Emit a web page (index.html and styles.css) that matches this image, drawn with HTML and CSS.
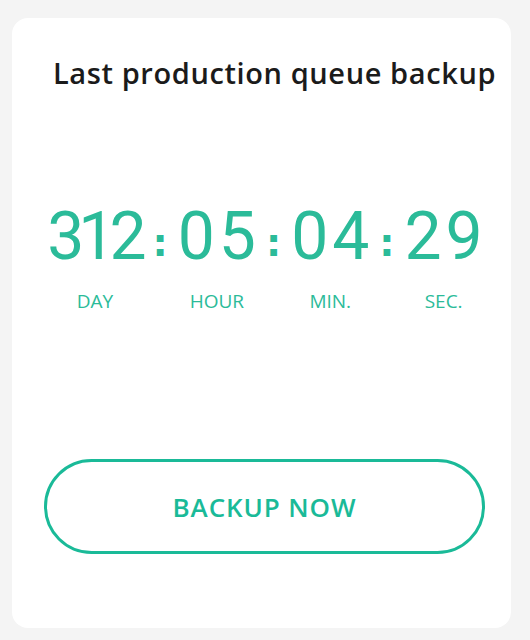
FILE: index.html
```html
<!DOCTYPE html>
<html lang="en">
<head>
<meta charset="utf-8">
<title>Backup</title>
<link rel="stylesheet" href="styles.css">
</head>
<body>
<div class="card">
  <h1 class="title">Last production queue backup</h1>
  <div class="countdown">
    <div class="unit"><div class="num num-narrow">312</div><div class="label">DAY</div></div>
    <div class="sep">:</div>
    <div class="unit"><div class="num">05</div><div class="label">HOUR</div></div>
    <div class="sep">:</div>
    <div class="unit"><div class="num">04</div><div class="label">MIN.</div></div>
    <div class="sep">:</div>
    <div class="unit"><div class="num">29</div><div class="label">SEC.</div></div>
  </div>
  <button class="btn">BACKUP NOW</button>
</div>
</body>
</html>
```
FILE: styles.css
```css
* { box-sizing: border-box; }
html, body { margin: 0; padding: 0; }
body {
  background: #f4f4f4;
  font-family: "Open Sans", "DejaVu Sans", sans-serif;
  width: 530px;
  height: 640px;
  padding: 18px 19px 12px 12px;
}
.card {
  background: #ffffff;
  border-radius: 16px;
  height: 610px;
  padding: 39px 15px 0 41px;
  display: flex;
  flex-direction: column;
}
.title {
  margin: 0;
  font-family: "Open Sans", sans-serif;
  font-weight: 600;
  font-size: 29px;
  line-height: 32px;
  color: #1b1b1b;
  letter-spacing: 0.6px;
  white-space: nowrap;
}
.countdown {
  margin-top: 115px;
  margin-left: -19px;
  display: flex;
  justify-content: center;
  align-items: flex-start;
  color: #2bbb99;
}
.unit {
  display: flex;
  flex-direction: column;
  align-items: center;
}
.num {
  font-family: "Roboto", sans-serif;
  font-weight: 400;
  font-size: 66px;
  line-height: 66px;
  letter-spacing: 4px;
  margin-right: -4px;
}
.num-narrow {
  letter-spacing: -6px;
  margin-right: 2px;
}
.label {
  margin-top: 19px;
  font-family: "Open Sans", sans-serif;
  font-size: 19px;
  line-height: 24px;
}
.sep {
  font-family: "DejaVu Sans", sans-serif;
  font-weight: 700;
  font-size: 38px;
  line-height: 66px;
  padding-top: 6px;
  margin: 0 10px;
}
.btn {
  margin-top: 146px;
  margin-left: -9px;
  width: 441px;
  height: 95px;
  border: 3px solid #1aba98;
  border-radius: 48px;
  background: #fff;
  color: #1aba98;
  font-family: "Open Sans", sans-serif;
  font-weight: 600;
  font-size: 26px;
  letter-spacing: 0.9px;
  padding: 0;
}
```
